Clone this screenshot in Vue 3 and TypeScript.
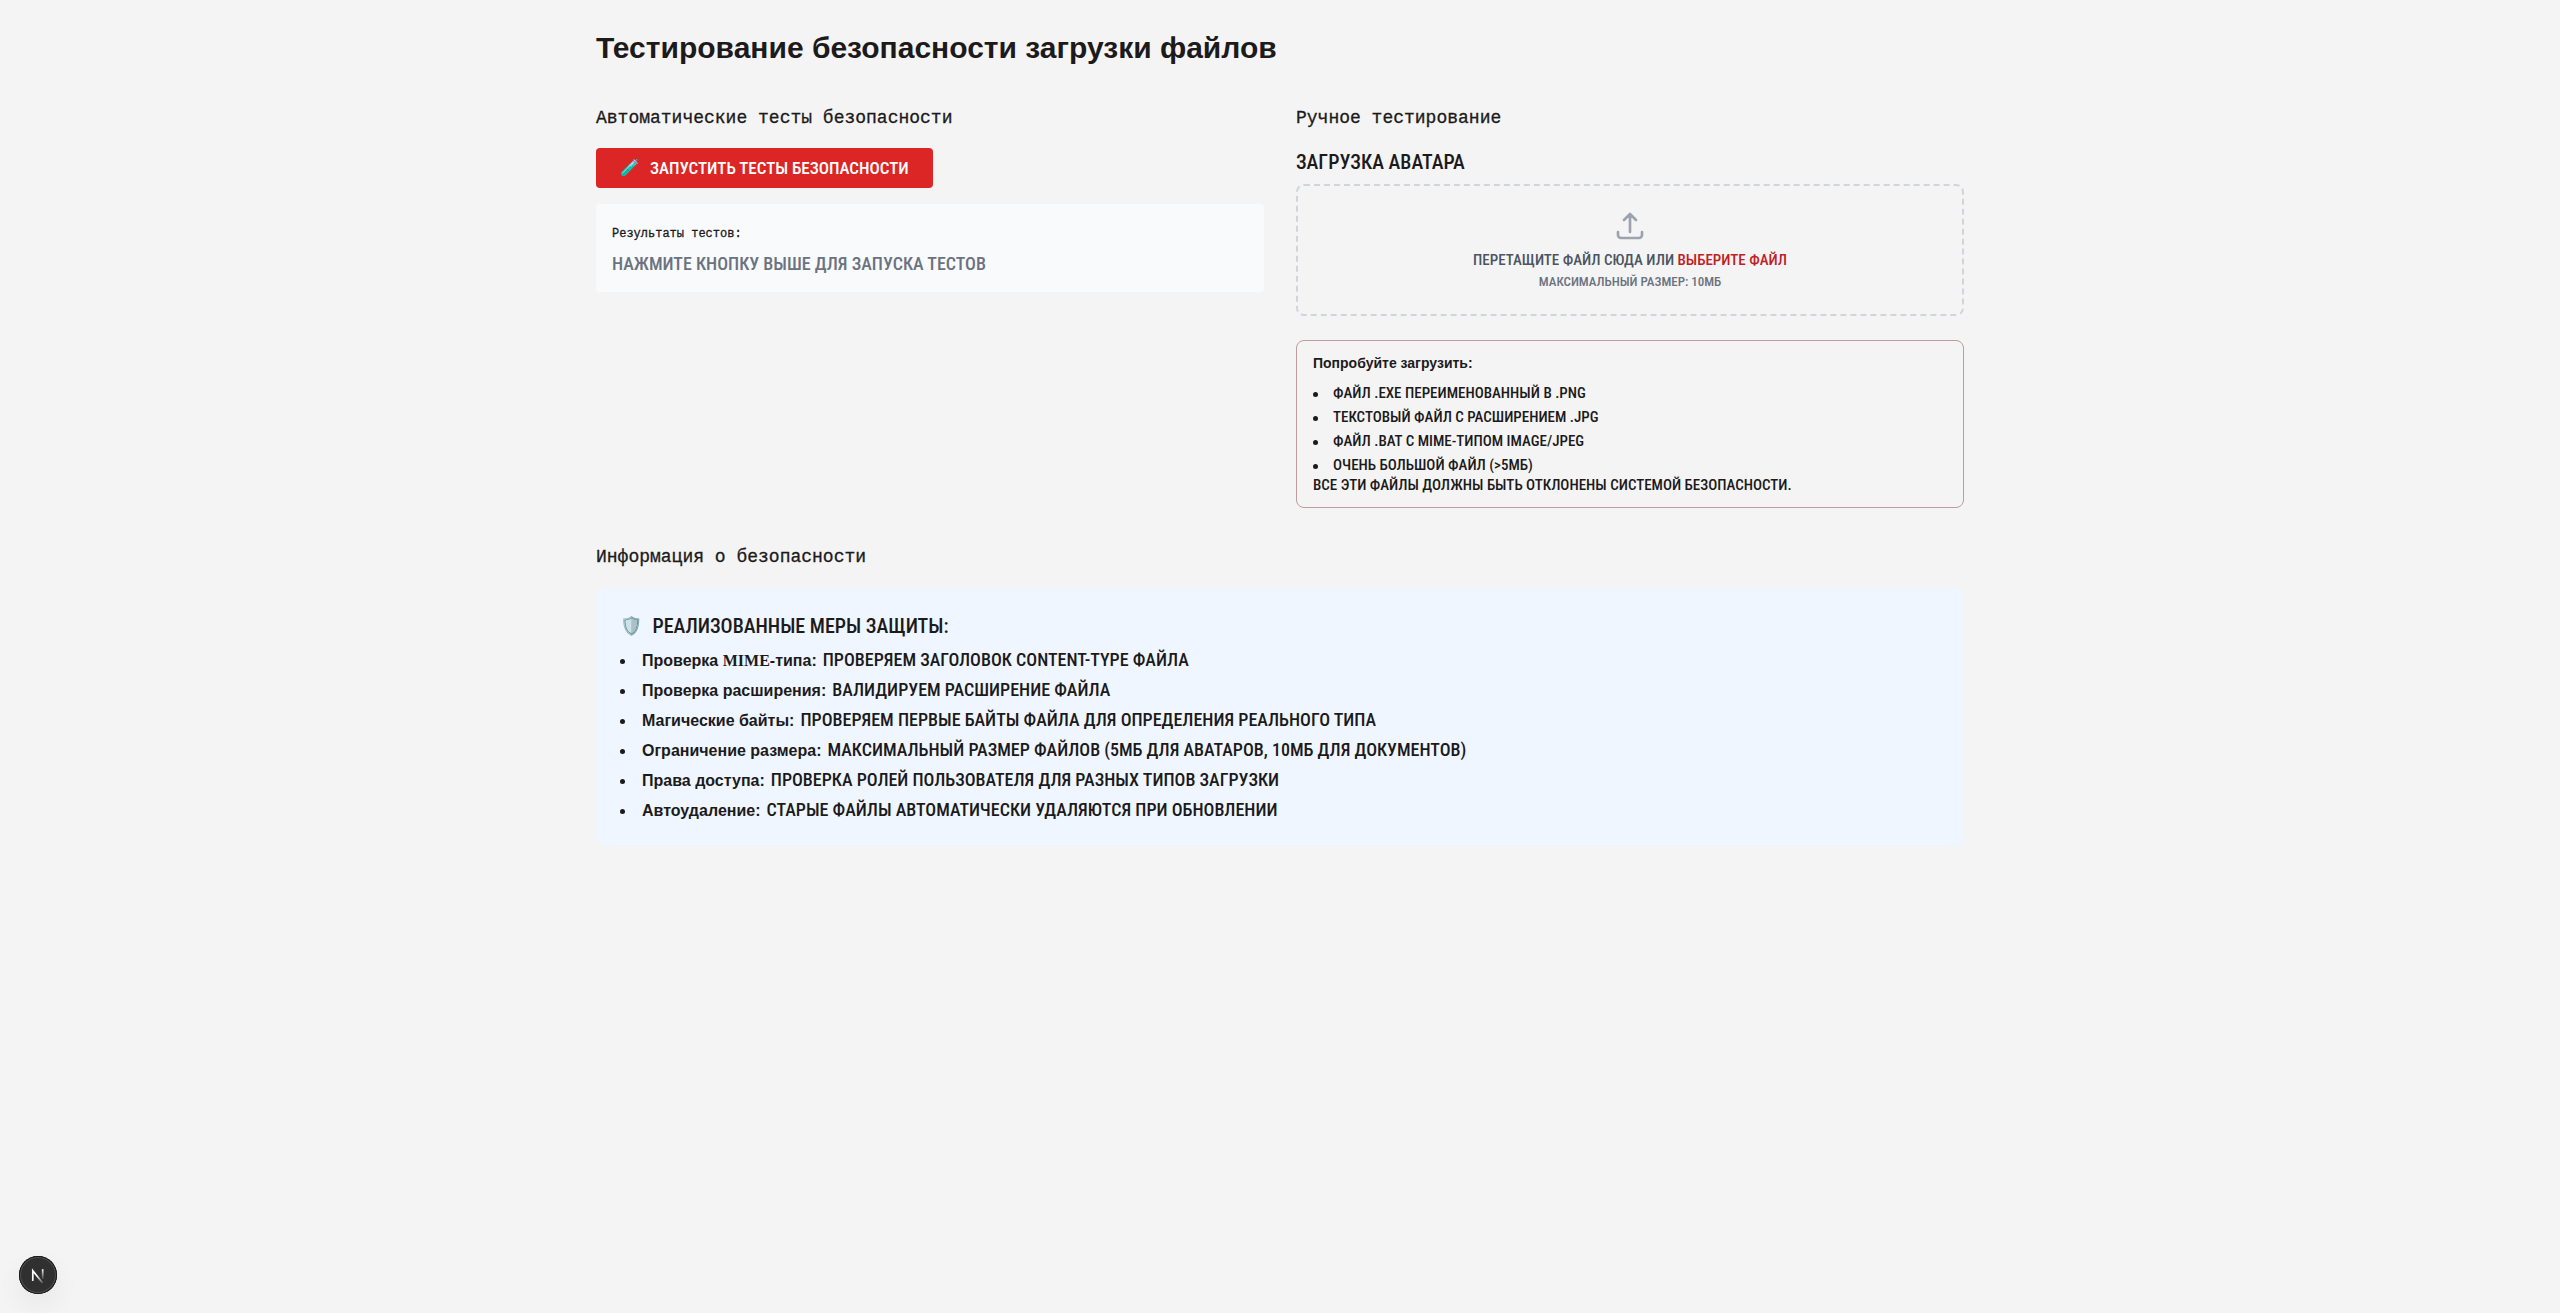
<script setup lang="ts">
interface Measure {
  title: string
  text: string
}

const attempts: string[] = [
  'Файл .exe переименованный в .png',
  'Текстовый файл с расширением .jpg',
  'Файл .bat с MIME-типом image/jpeg',
  'Очень большой файл (>5МБ)',
]

const measures: Measure[] = [
  { title: 'Проверка расширения:', text: 'Валидируем расширение файла' },
  { title: 'Магические байты:', text: 'Проверяем первые байты файла для определения реального типа' },
  { title: 'Ограничение размера:', text: 'Максимальный размер файлов (5МБ для аватаров, 10МБ для документов)' },
  { title: 'Права доступа:', text: 'Проверка ролей пользователя для разных типов загрузки' },
  { title: 'Автоудаление:', text: 'Старые файлы автоматически удаляются при обновлении' },
]
</script>

<template>
  <main class="page">
    <h1 class="title">Тестирование безопасности загрузки файлов</h1>

    <div class="columns">
      <section>
        <h2 class="heading">Автоматические тесты безопасности</h2>
        <button type="button" class="run">
          <span class="emoji">🧪</span>
          <span>Запустить тесты безопасности</span>
        </button>
        <div class="results">
          <h3 class="results-title">Результаты тестов:</h3>
          <p class="results-empty">Нажмите кнопку выше для запуска тестов</p>
        </div>
      </section>

      <section>
        <h2 class="heading">Ручное тестирование</h2>
        <h3 class="subheading">Загрузка аватара</h3>
        <div class="dropzone">
          <svg class="upload" viewBox="0 0 24 24" fill="none" stroke="currentColor" stroke-width="2" stroke-linecap="round" stroke-linejoin="round" aria-hidden="true">
            <path d="M3 16.5v2.25A2.25 2.25 0 0 0 5.25 21h13.5A2.25 2.25 0 0 0 21 18.75V16.5m-13.5-9L12 3m0 0 4.5 4.5M12 3v13.5" />
          </svg>
          <p class="drop-text">Перетащите файл сюда или <button type="button" class="pick">выберите файл</button></p>
          <p class="drop-hint">Максимальный размер: 10МБ</p>
        </div>

        <div class="tips">
          <strong class="tips-title">Попробуйте загрузить:</strong>
          <ul class="tips-list">
            <li v-for="item in attempts" :key="item">{{ item }}</li>
          </ul>
          <p class="tips-note">Все эти файлы должны быть отклонены системой безопасности.</p>
        </div>
      </section>
    </div>

    <section class="info">
      <h2 class="heading">Информация о безопасности</h2>
      <div class="panel">
        <h3 class="panel-title"><span class="shield">🛡️</span><span>Реализованные меры защиты:</span></h3>
        <ul class="panel-list">
          <li>
            <strong>Проверка <span class="gothic">MIME</span>-типа:</strong>
            <span class="desc">Проверяем заголовок Content-Type файла</span>
          </li>
          <li v-for="m in measures" :key="m.title">
            <strong>{{ m.title }}</strong>
            <span class="desc">{{ m.text }}</span>
          </li>
        </ul>
      </div>
    </section>

    <button type="button" class="devtools" aria-label="Next.js">
      <svg width="38" height="38" viewBox="0 0 38 38" fill="none" aria-hidden="true">
        <defs>
          <linearGradient id="diag" x1="19" y1="19" x2="25" y2="27" gradientUnits="userSpaceOnUse">
            <stop stop-color="#fff" />
            <stop offset="1" stop-color="#fff" stop-opacity="0.1" />
          </linearGradient>
          <linearGradient id="stem" x1="24" y1="13" x2="24" y2="24" gradientUnits="userSpaceOnUse">
            <stop stop-color="#fff" />
            <stop offset="1" stop-color="#fff" stop-opacity="0" />
          </linearGradient>
        </defs>
        <path d="M13.8 25V14.6L23.6 27" stroke="url(#diag)" stroke-width="1.7" />
        <path d="M23.7 13.2V23" stroke="url(#stem)" stroke-width="1.7" />
      </svg>
    </button>
  </main>
</template>

<style>
body {
  background: #f4f4f4;
}
</style>

<style scoped>
.page {
  box-sizing: border-box;
  max-width: 1400px;
  margin: 0 auto;
  padding: 30px 16px;
  color: #1c1a1b;
  font-family: "Roboto Condensed", Roboto, "Liberation Sans", sans-serif;
  font-size: 18px;
  font-weight: 500;
  line-height: 24px;
}

h1, h2, h3, p, ul {
  margin: 0;
  padding: 0;
}

.title {
  font: 700 30px/36px "Liberation Sans", Arial, sans-serif;
  margin-bottom: 34px;
}

.columns {
  display: grid;
  grid-template-columns: 1fr 1fr;
  gap: 32px;
}

.heading {
  font: 400 18px/36px "Liberation Mono", "Courier New", monospace;
  margin-bottom: 12px;
  -webkit-text-stroke: 0.3px currentColor;
}

.run {
  display: flex;
  align-items: center;
  gap: 10px;
  height: 40px;
  padding: 0 24px;
  border: 0;
  border-radius: 4px;
  background: #dc2626;
  color: #fff;
  font: inherit;
  font-size: 17px;
  text-transform: uppercase;
  cursor: pointer;
}

.emoji {
  font: 16px/24px "Noto Color Emoji", sans-serif;
}

.results {
  margin-top: 16px;
  padding: 16px;
  border-radius: 4px;
  background: #f9fafb;
}

.results-title {
  font: 400 12px/28px "Liberation Mono", "Courier New", monospace;
  margin-bottom: 4px;
  -webkit-text-stroke: 0.3px currentColor;
}

.results-empty {
  color: #6b7280;
  text-transform: uppercase;
}

.subheading {
  font-size: 20px;
  line-height: 28px;
  font-weight: 500;
  margin-bottom: 8px;
  text-transform: uppercase;
}

.dropzone {
  display: flex;
  flex-direction: column;
  align-items: center;
  padding: 24px;
  border: 2px dashed #d1d5db;
  border-radius: 8px;
  text-transform: uppercase;
}

.upload {
  width: 32px;
  height: 32px;
  margin-bottom: 8px;
  color: #9ca3af;
}

.drop-text {
  font-size: 15px;
  line-height: 20px;
  color: #4b5563;
}

.pick {
  padding: 0;
  border: 0;
  background: none;
  color: #c02026;
  font: inherit;
  text-transform: inherit;
  cursor: pointer;
}

.drop-hint {
  margin-top: 4px;
  font-size: 13px;
  line-height: 16px;
  color: #6b7280;
}

.tips {
  margin-top: 24px;
  padding: 12px 16px;
  border: 1px solid #c09a9e;
  border-radius: 8px;
  font-size: 15px;
  line-height: 20px;
}

.tips-title {
  display: block;
  margin-bottom: 10px;
  font: 700 14px/20px "Liberation Sans", Arial, sans-serif;
}

.tips-list,
.panel-list {
  list-style: none;
}

.tips-list li::before,
.panel-list li::before {
  content: "";
  display: inline-block;
  width: 5px;
  height: 5px;
  margin-right: 15px;
  border-radius: 50%;
  background: currentColor;
  vertical-align: middle;
}

.panel-list li::before {
  margin-right: 17px;
}

.tips-list {
  text-transform: uppercase;
}

.tips-list li + li {
  margin-top: 4px;
}

.tips-note {
  text-transform: uppercase;
}

.info {
  margin-top: 32px;
}

.info .heading {
  line-height: 34px;
  margin-bottom: 14px;
}

.panel {
  padding: 24px;
  border-radius: 8px;
  background: #eff6ff;
}

.panel-title {
  display: flex;
  gap: 10px;
  margin-bottom: 8px;
  font-size: 20px;
  line-height: 28px;
  font-weight: 500;
  text-transform: uppercase;
}

.shield {
  font: 18px/28px "Noto Color Emoji", sans-serif;
}

.panel-list li + li {
  margin-top: 6px;
}

.panel-list strong {
  margin-right: 6px;
  font: 700 16px/20px "Liberation Sans", Arial, sans-serif;
}

.gothic {
  font-family: "Liberation Serif", "Times New Roman", serif;
}

.desc {
  text-transform: uppercase;
}

.devtools {
  position: fixed;
  left: 19px;
  bottom: 19px;
  width: 38px;
  height: 38px;
  padding: 0;
  border: 0;
  border-radius: 50%;
  background: #303030;
  box-shadow: inset 0 0 0 1px #171717, inset 0 0 0 2px #505050, 0 12px 28px rgb(0 0 0 / 6%);
  cursor: pointer;
}

.devtools svg {
  display: block;
}
</style>
